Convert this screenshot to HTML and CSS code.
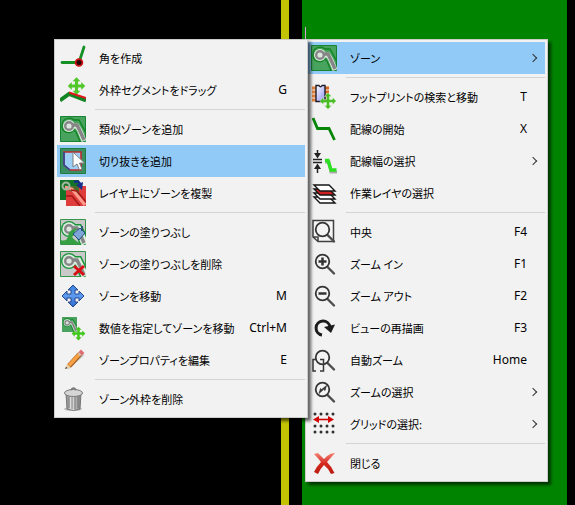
FILE: index.html
```html
<!DOCTYPE html>
<html lang="ja">
<head>
<meta charset="utf-8">
<title>PCB エディター</title>
<link rel="stylesheet" href="styles.css">
</head>
<body>
<svg class="defs" aria-hidden="true">
  <defs>
    <symbol id="track" viewBox="0 0 26 26">
      <path d="M9 10H17L20 15L24 25" fill="none" stroke="#d8eadd" stroke-width="5"/>
      <circle cx="9" cy="10" r="6" fill="#d8eadd"/>
      <path d="M12 9H17L20 15L24 24" fill="none" stroke="#868686" stroke-width="3.4"/>
      <circle cx="9" cy="10" r="3.8" fill="#dce5df" stroke="#868686" stroke-width="2.4"/>
    </symbol>
    <symbol id="zone" viewBox="0 0 26 26">
      <path d="M.5 .5H25.5V25.5H.5Z" fill="#48a35e" stroke="#168532"/>
      <path d="M20 25.5L16 16L14 14C9 19 2 16 2 10C2 1 11 1 14 4H19L25.5 16" fill="none" stroke="#108322" stroke-width="1.3"/>
      <use href="#track"/>
    </symbol>
    <symbol id="gray-zone" viewBox="0 0 26 26">
      <path d="M.5 .5H25.5V25.5H.5Z" fill="#c9c9c9" stroke="#37954a"/>
      <path d="M9 10H18L21 16L25 25" fill="none" stroke="#15943a" stroke-width="10"/>
      <circle cx="9" cy="10" r="8" fill="#15943a"/>
      <path d="M9 10H18L21 16L25 25" fill="none" stroke="#e1eee2" stroke-width="7"/>
      <circle cx="9" cy="10" r="6.7" fill="#e1eee2"/>
      <use href="#track"/>
    </symbol>
    <symbol id="arrows" viewBox="0 0 24 24">
      <path d="M12 1L17 6H14V10H18V7L23 12L18 17V14H14V18H17L12 23L7 18H10V14H6V17L1 12L6 7V10H10V6H7Z"/>
    </symbol>
    <symbol id="lens" viewBox="0 0 26 26">
      <path d="M16 15.5L23 22.5" stroke="#4d4d4d" stroke-width="2.4" stroke-linecap="round"/>
      <circle cx="11.5" cy="10.5" r="6.8" fill="#f4f4f4" stroke="#353535" stroke-width="1.8"/>
    </symbol>
    <linearGradient id="red" x2="0" y2="1"><stop stop-color="#f58375"/><stop offset=".5" stop-color="#d52a20"/><stop offset="1" stop-color="#b9180e"/></linearGradient>
    <linearGradient id="chip" x2="1" y2="1"><stop stop-color="#fff"/><stop offset="1" stop-color="#8c90f5"/></linearGradient>
    <linearGradient id="metal"><stop stop-color="#777"/><stop offset=".35" stop-color="#eee"/><stop offset="1" stop-color="#777"/></linearGradient>
    <linearGradient id="blue" x2="0" y2="1"><stop stop-color="#3c7fe0"/><stop offset=".5" stop-color="#5d9bf0"/><stop offset="1" stop-color="#2a66cc"/></linearGradient>
  </defs>
</svg>

<main class="board">
  <div class="gap-left"></div>
  <div class="edge"></div>
  <div class="clearance"></div>
  <div class="copper"></div>
  <div class="margin"></div>
</main>
<div class="cursor"></div>

<nav class="menu context" aria-label="コンテキストメニュー">
  <button class="item active"><svg viewBox="0 0 26 26"><use href="#zone"/></svg><span class="label">ゾーン</span><span class="key"></span><span class="arrow"></span></button>
  <hr>
  <button class="item"><svg viewBox="0 0 26 26"><path d="M1 4H14M1 8H14M1 12H14M1 16H14" stroke="#e8833a" stroke-width="3"/><path d="M14 4H18M14 8H18M14 12H18M14 16H18" stroke="#d8691b" stroke-width="3"/><path d="M5 1.5H8Q9.5 4 11 1.5H14V17.5H5Z" fill="url(#chip)" stroke="#1d1d2a" stroke-width="1.4"/><use href="#arrows" x="8" y="8" width="18" height="18" fill="#48bd25" stroke="#fff" stroke-width=".5"/></svg><span class="label">フットプリントの検索と移動</span><span class="key">T</span><span class="arrow none"></span></button>
  <button class="item"><svg viewBox="0 0 26 26"><path d="M2 2L6.5 12.5H18L23.500 24" fill="none" stroke="#068606" stroke-width="2.8"/></svg><span class="label">配線の開始</span><span class="key">X</span><span class="arrow none"></span></button>
  <button class="item"><svg viewBox="0 0 26 26"><path d="M2 11.5H11M2 14.5H11M6.500 2V8M6.500 18V25" stroke="#222" stroke-width="1.5"/><path d="M3 5H10L6.500 10.500ZM3 21H10L6.500 15.500Z" fill="#222"/><path d="M14 14H18L20 24H26" fill="none" stroke="#aaa" stroke-width="3"/><path d="M14 12.500H17L20 22H25.500" fill="none" stroke="#2cdf20" stroke-width="3.5"/></svg><span class="label">配線幅の選択</span><span class="key"></span><span class="arrow"></span></button>
  <button class="item"><svg viewBox="0 0 26 26"><g stroke="#151515" stroke-width="1.4"><path d="M3 17H18L24 23H9Z" fill="#fff"/><path d="M3 13H18L24 19H9Z" fill="#fff"/><path d="M3 9H18L24 15H9Z" fill="#cf2020"/><path d="M3 5H18L24 11H9Z" fill="#fff"/></g></svg><span class="label">作業レイヤの選択</span><span class="key"></span><span class="arrow none"></span></button>
  <hr>
  <button class="item"><svg viewBox="0 0 26 26"><path d="M2 1.5H22.500V22.500H7L2 18Z M2 18H7V22.500" fill="#f5f5f5" stroke="#414141" stroke-width="1.5"/><use href="#lens"/></svg><span class="label">中央</span><span class="key">F4</span><span class="arrow none"></span></button>
  <button class="item"><svg viewBox="0 0 26 26"><use href="#lens"/><path d="M7.500 10.500H15.500M11.500 6.500V14.500" stroke="#333" stroke-width="2.5"/></svg><span class="label">ズーム イン</span><span class="key">F1</span><span class="arrow none"></span></button>
  <button class="item"><svg viewBox="0 0 26 26"><use href="#lens"/><path d="M7.500 10.500H15.500" stroke="#333" stroke-width="2.5"/></svg><span class="label">ズーム アウト</span><span class="key">F2</span><span class="arrow none"></span></button>
  <button class="item"><svg viewBox="0 0 26 26"><path d="M11 20A7 7 0 1 1 19 12" fill="none" stroke="#1c1c1c" stroke-width="3"/><path d="M13 12L24 9.500L20 18Z" fill="#1c1c1c"/></svg><span class="label">ビューの再描画</span><span class="key">F3</span><span class="arrow none"></span></button>
  <button class="item"><svg viewBox="0 0 26 26"><use href="#lens"/><path d="M5 12.500H2V24H5M9 12.500H12.500V24H9" fill="none" stroke="#393939" stroke-width="1.5"/></svg><span class="label">自動ズーム</span><span class="key">Home</span><span class="arrow none"></span></button>
  <button class="item"><svg viewBox="0 0 26 26"><use href="#lens"/><path d="M15.500 6.500L14 11.500L12.700 10.300L8 14.500L9.500 9.500L10.700 10.500Z" fill="#333" stroke="#333" stroke-width=".7"/></svg><span class="label">ズームの選択</span><span class="key"></span><span class="arrow"></span></button>
  <button class="item"><svg viewBox="0 0 26 26"><path d="M4 3H24M4 15H24M4 21H24" stroke="#303030" stroke-width="3" stroke-linecap="round" stroke-dasharray="0 6"/><path d="M5 8.500H21" stroke="#d20808" stroke-width="1.6"/><path d="M2 8.500L8 5V12ZM23 8.500L17 5V12Z" fill="#d20808"/></svg><span class="label">グリッドの選択:</span><span class="key"></span><span class="arrow"></span></button>
  <hr>
  <button class="item"><svg viewBox="0 0 26 26"><path d="M3 4L7 3L13 9C16 6 19 3 24 3L16 12Q21 17 23.500 23L20 24Q17 18 13 15Q9 19 7 24L3 22Q6 16 10 12Q7 8 3 4Z" fill="url(#red)"/></svg><span class="label">閉じる</span><span class="key"></span><span class="arrow none"></span></button>
</nav>

<nav class="menu submenu" aria-label="ゾーン">
  <button class="item"><svg viewBox="0 0 26 26"><path d="M2 17.500H19L24 2" fill="none" stroke="#159025" stroke-width="2.8" stroke-linecap="round"/><circle cx="19" cy="17.500" r="3.4" fill="#260505" stroke="#cf1515" stroke-width="1.8"/></svg><span class="label">角を作成</span><span class="key"></span></button>
  <button class="item"><svg viewBox="0 0 26 26"><use href="#arrows" x="7" y="-1" width="19" height="20" fill="#51c72a"/><path d="M0 23.500L9 17L26 23.500" fill="none" stroke="#108522" stroke-width="4"/><path d="M9 15.500L26 21" stroke="#df1919" stroke-width="2"/></svg><span class="label">外枠セグメントをドラッグ</span><span class="key">G</span></button>
  <hr>
  <button class="item"><svg viewBox="0 0 26 26"><use href="#zone"/></svg><span class="label">類似ゾーンを追加</span><span class="key"></span></button>
  <button class="item active"><svg viewBox="0 0 26 26"><path d="M.5 .5H25.500V25.500H.5Z" fill="#398f63" stroke="#207d3b"/><path d="M4 4H21V22H10L4 17Z" fill="#9dcef6" stroke="#c02a30" stroke-width="1.6"/><path d="M4 4V17L10 22" fill="none" stroke="#284a9b" stroke-width="1.5"/><path d="M13 4V19L17 16L19.500 22L22 21L19.500 15H24.500Z" fill="#fff" stroke="#7d7d7d"/></svg><span class="label">切り抜きを追加</span><span class="key"></span></button>
  <button class="item"><svg viewBox="0 0 26 26"><path d="M0 0H19V20H0Z" fill="#137529"/><path d="M6 6H26V26H6Z" fill="#df3d3b"/><path d="M6 6H19V15L6 9Z" fill="#4a6b2a"/><path d="M5 7L12 9L25 25" fill="none" stroke="#ff9b8d" stroke-width="3"/><circle cx="6" cy="6" r="3.5" fill="none" stroke="#a4b7a3" stroke-width="2"/><path d="M6 16H12L20 26M11 10L17 11L26 22" fill="none" stroke="#a51919" stroke-width="1.5"/><path d="M14 2Q20 0 20 5" fill="none" stroke="#142e8a" stroke-width="2.5"/><path d="M16 5L23 2L22 10Z" fill="#142e8a"/></svg><span class="label">レイヤ上にゾーンを複製</span><span class="key"></span></button>
  <hr>
  <button class="item"><svg viewBox="0 0 26 26"><use href="#gray-zone"/><path d="M1 25V21Q7 23 8 17Q9 11 17 9L12 18Q16 23 22 25Z" fill="#35a142"/><path d="M13 15L20 9L25 14L19 21Z" fill="#7da6d7" stroke="#244e83"/><path d="M22 12V7" stroke="#234776" stroke-width="1.5"/></svg><span class="label">ゾーンの塗りつぶし</span><span class="key"></span></button>
  <button class="item"><svg viewBox="0 0 26 26"><use href="#gray-zone"/><path d="M14 15L24 24M24 15L14 24" stroke="#d90d12" stroke-width="3"/></svg><span class="label">ゾーンの塗りつぶしを削除</span><span class="key"></span></button>
  <button class="item"><svg viewBox="0 0 26 26"><use href="#arrows" x="1" y="1" width="24" height="24" fill="url(#blue)" stroke="#28498c" stroke-width="1"/></svg><span class="label">ゾーンを移動</span><span class="key">M</span></button>
  <button class="item"><svg viewBox="0 0 26 26"><use href="#zone" x="2" y="2" width="15" height="15"/><use href="#arrows" x="11" y="11" width="15" height="15" fill="#42c81d"/></svg><span class="label">数値を指定してゾーンを移動</span><span class="key">Ctrl+M</span></button>
  <button class="item"><svg viewBox="0 0 26 26"><path d="M7 21L23 7" stroke="#ccc" stroke-width="4"/><path d="M9 19L20 7" stroke="#9d581e" stroke-width="5"/><path d="M9 18.500L20 6.500" stroke="#f7a044" stroke-width="3.5"/><path d="M18 7L20 5L22 7L20 9Z" fill="#bfc5cb"/><path d="M20 5L21 4L23 6L22 7Z" stroke="#e26d70" fill="#e26d70" stroke-width="2"/><path d="M5 22L7 17L10.500 20.500Z" fill="#efd0a5"/><path d="M5 22L6 20L7.500 21Z" fill="#222"/></svg><span class="label">ゾーンプロパティを編集</span><span class="key">E</span></button>
  <hr>
  <button class="item"><svg viewBox="0 0 26 26"><ellipse cx="13" cy="23" rx="9" ry="2" fill="#bbb"/><path d="M6 7H21L20 23Q13 26 7 23Z" fill="url(#metal)" stroke="#777"/><path d="M9 11V22M12 11V23M15 11V23M18 11V22" stroke="#777"/><ellipse cx="13.5" cy="7" rx="9" ry="3.5" fill="#d5d5d5" stroke="#777"/><path d="M11 4Q13.500 0 16 4" fill="none" stroke="#777" stroke-width="1.5"/></svg><span class="label">ゾーン外枠を削除</span><span class="key"></span></button>
</nav>
</body>
</html>
```

FILE: styles.css
```css
* { box-sizing: border-box; }

body {
  margin: 0;
  background: #000;
  color: #000;
  font: 12px/16px "Noto Sans", "Noto Sans CJK JP", sans-serif;
}

.defs { position: absolute; width: 0; height: 0; }

.board { display: flex; min-height: 100vh; }
.gap-left { flex: 0 0 281px; }
.edge { flex: 0 0 8px; background: #c2c200; }
.clearance { flex: 0 0 13px; }
.copper { flex: 1; background: #008400; }
.margin { flex: 0 0 8px; }

.cursor {
  position: absolute;
  left: 305px;
  top: 27px;
  width: 1px;
  height: 12px;
  background: #d6a0d6;
}

.menu {
  position: absolute;
  top: 39px;
  display: flex;
  flex-direction: column;
  padding: 2px;
  border: 1px solid #ccc;
  background: #f2f2f2;
  box-shadow: 3px 3px 3px rgba(0, 0, 0, 0.6);
}
.context { left: 305px; width: 243px; }
.submenu { left: 54px; width: 254px; }

.item {
  display: flex;
  align-items: center;
  height: 32px;
  margin: 0;
  padding: 0 18px 0 3px;
  border: 0;
  background: none;
  color: inherit;
  font: inherit;
  text-align: left;
}
.context .item { padding-right: 9px; }
.item.active { background: #91c9f7; }
.item svg { flex: none; width: 26px; height: 26px; margin-right: 13px; }

.label {
  flex: 1;
  font-family: "Noto Sans CJK JP", sans-serif;
  font-size: 11px;
  font-feature-settings: "palt";
  white-space: nowrap;
}

.arrow {
  width: 6px;
  height: 6px;
  margin-left: 3px;
  border: solid #333;
  border-width: 1px 1px 0 0;
  transform: rotate(45deg);
}
.arrow.none { visibility: hidden; }

hr {
  width: auto;
  height: 1px;
  margin: 3px 0 3px 38px;
  border: 0;
  background: #d4d4d4;
}
```
